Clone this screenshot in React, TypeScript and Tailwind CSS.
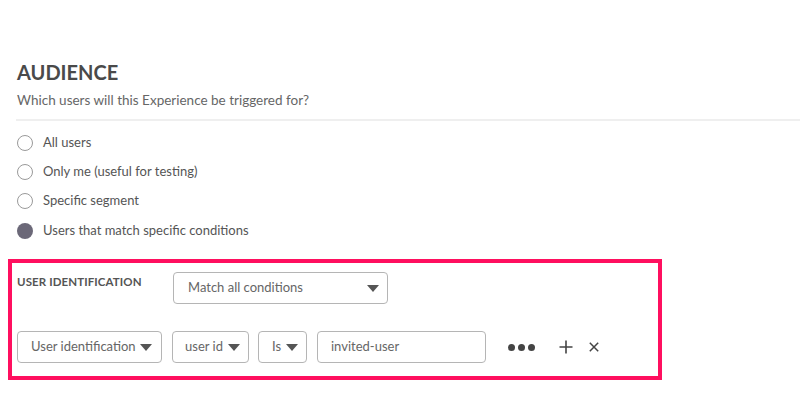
import React from "react";

const Caret = () => (
  <svg width="12" height="7" viewBox="0 0 12 7" className="shrink-0">
    <path d="M0 0 H12 L6 7 Z" fill="#555" />
  </svg>
);

const Select = ({ label, w, pl = "pl-[14px]", pr = "pr-[10px]" }: { label: string; w: string; pl?: string; pr?: string }) => (
  <div className={`${w} h-[32px] border border-[#b5b5b5] rounded-[4px] flex items-center justify-between gap-[4px] ${pl} ${pr} text-[13px] text-[#666] whitespace-nowrap`}>
    <span>{label}</span>
    <Caret />
  </div>
);

const Radio = ({ label, checked }: { label: string; checked?: boolean }) => (
  <div className="h-[29.3px] flex items-center gap-[10px]">
    {checked ? (
      <div className="w-[16px] h-[16px] rounded-full bg-[#6b6878]" />
    ) : (
      <div className="w-[16px] h-[16px] rounded-full border border-[#9a9a9a] bg-white" />
    )}
    <span className="text-[13px] text-[#555]">{label}</span>
  </div>
);

export default function App() {
  return (
    <div className="w-[800px] h-[402px] bg-white overflow-hidden pt-[59px]" style={{ fontFamily: "Lato, 'Open Sans', sans-serif" }}>
      <div className="pl-[17px]">
        <h2 className="text-[20px] leading-[26px] font-bold text-[#4a4a4a]">AUDIENCE</h2>
        <p className="mt-[6px] text-[13.5px] leading-[18px] text-[#666]">Which users will this Experience be triggered for?</p>
      </div>
      <div className="ml-[16px] mt-[10px] h-[2px] bg-[#efefef]" />
      <div className="pl-[17px] mt-[7px] flex flex-col">
        <Radio label="All users" />
        <Radio label="Only me (useful for testing)" />
        <Radio label="Specific segment" />
        <Radio label="Users that match specific conditions" checked />
      </div>
      <div className="ml-[8px] mt-[14px] w-[654px] border-4 border-[#ff0f5f] pl-[5px] pt-[9px] pb-[13px]">
        <div className="flex items-start">
          <div className="w-[156px] pt-[1px] text-[11.5px] font-bold text-[#555] tracking-[0.1px]">USER IDENTIFICATION</div>
          <Select label="Match all conditions" w="w-[215px]" pr="pr-[8px]" />
        </div>
        <div className="mt-[27px] flex items-center">
          <Select label="User identification" w="w-[145px]" pl="pl-[13px]" pr="pr-[9px]" />
          <div className="w-[10px]" />
          <Select label="user id" w="w-[77px]" pl="pl-[12px]" pr="pr-[8px]" />
          <div className="w-[9px]" />
          <Select label="Is" w="w-[49px]" pl="pl-[13px]" pr="pr-[8px]" />
          <div className="w-[10px]" />
          <div className="w-[169px] h-[32px] border border-[#b5b5b5] rounded-[4px] flex items-center pl-[13px] text-[13px] text-[#666]">invited-user</div>
          <div className="ml-[22px] flex items-center gap-[3px]">
            <div className="w-[7px] h-[7px] rounded-full bg-[#444]" />
            <div className="w-[7px] h-[7px] rounded-full bg-[#444]" />
            <div className="w-[7px] h-[7px] rounded-full bg-[#444]" />
          </div>
          <svg width="14" height="14" viewBox="0 0 14 14" className="ml-[24px]">
            <path d="M7 0.5 V13.5 M0.5 7 H13.5" stroke="#444" strokeWidth="1.6" />
          </svg>
          <svg width="10" height="10" viewBox="0 0 10 10" className="ml-[16px]">
            <path d="M0.8 0.8 L9.2 9.2 M9.2 0.8 L0.8 9.2" stroke="#444" strokeWidth="1.5" />
          </svg>
        </div>
      </div>
    </div>
  );
}
